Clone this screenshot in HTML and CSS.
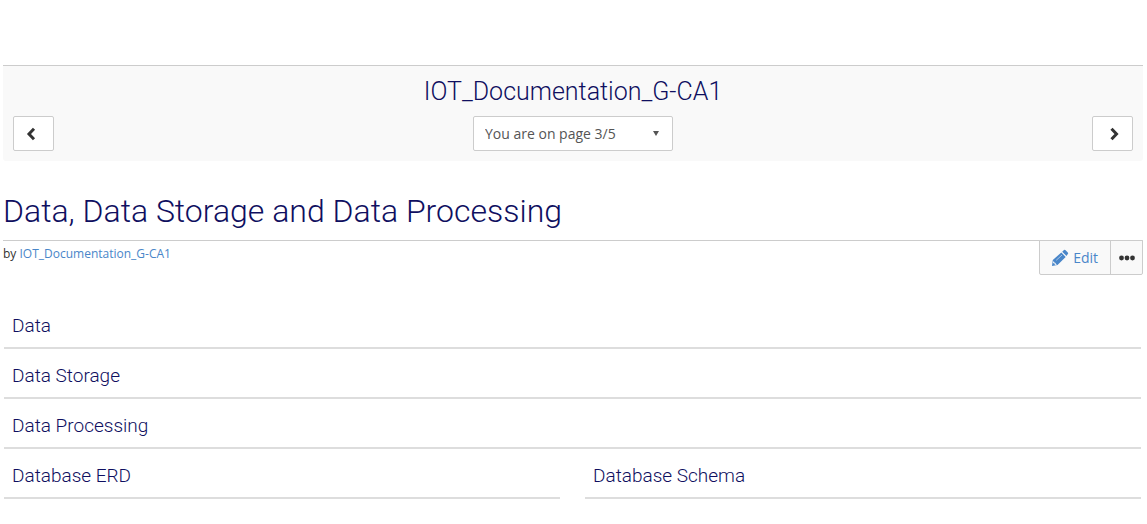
FILE: index.html
```html
<!DOCTYPE html>
<html lang="en">
<head>
<meta charset="utf-8">
<title>Data, Data Storage and Data Processing</title>
<link rel="stylesheet" href="styles.css">
</head>
<body>
<main class="page">
  <nav class="collection" aria-label="Collection pages">
    <h2 class="collection-title">IOT_Documentation_G-CA1</h2>
    <div class="collection-controls">
      <button class="nav-button" type="button" aria-label="Previous page">
        <svg width="10" height="14" viewBox="0 0 10 14" aria-hidden="true"><path d="M8 1.800 3 7l5 5.200" fill="none" stroke="currentColor" stroke-width="3"/></svg>
      </button>
      <div class="page-picker">
        <select class="page-select" aria-label="Page">
          <option>You are on page 3/5</option>
        </select>
      </div>
      <button class="nav-button nav-next" type="button" aria-label="Next page">
        <svg width="10" height="14" viewBox="0 0 10 14" aria-hidden="true"><path d="m1.500 1.800 5 5.200-5 5.200" fill="none" stroke="currentColor" stroke-width="3"/></svg>
      </button>
    </div>
  </nav>

  <h1 class="page-title">Data, Data Storage and Data Processing</h1>
  <div class="page-meta">
    <p class="byline">by <a href="#">IOT_Documentation_G-CA1</a></p>
    <div class="actions">
      <button class="action edit" type="button">
        <svg width="18" height="18" viewBox="0 0 18 18" aria-hidden="true"><path d="M1 17l.8-6L10.300 3.500l4.400 4.400L6.500 16z M11.200 2.700 13 1.100q.8-.6 1.600.1l2.200 2.200q.7.800 0 1.600L15.500 7z" fill="currentColor"/><path d="M5.200 11.300 11 6" stroke="#a9c5e6" stroke-width="1"/><path d="M2.600 12.500v1.500h1.600v1.600h1.300" fill="none" stroke="#f9f9f9" stroke-width="1"/></svg>
        Edit
      </button>
      <button class="action more" type="button" aria-label="More options">
        <svg width="16" height="6" viewBox="0 0 16 6" fill="currentColor" aria-hidden="true"><circle cx="2.500" cy="3" r="2.400"/><circle cx="8" cy="3" r="2.400"/><circle cx="13.500" cy="3" r="2.400"/></svg>
      </button>
    </div>
  </div>

  <div class="blocks">
    <h3 class="block wide">Data</h3>
    <h3 class="block wide">Data Storage</h3>
    <h3 class="block wide">Data Processing</h3>
    <h3 class="block">Database ERD</h3>
    <h3 class="block">Database Schema</h3>
  </div>
</main>
</body>
</html>
```
FILE: styles.css
```css
* { box-sizing: border-box; }

body {
  margin: 0;
  background: #fff;
  color: #333;
  font-family: "Open Sans", sans-serif;
  font-size: 14px;
}

h1, h2, h3, p { margin: 0; }

h1, h2, h3 {
  color: #0f0f60;
  font-family: "Roboto Slab", Roboto, sans-serif;
  font-weight: 300;
}

button, select { font: inherit; }

.page { padding: 65px 4px 0 3px; }

.collection {
  padding: 9px 10px 10px;
  border-top: 1px solid #ccc;
  border-radius: 0 0 3px 3px;
  background: #f9f9f9;
}

.collection-title {
  font-size: 25px;
  line-height: 34px;
  text-align: center;
}

.collection-controls {
  display: grid;
  grid-template-columns: 1fr 200px 1fr;
  margin-top: 7px;
}

.nav-button {
  display: flex;
  align-items: center;
  justify-content: center;
  width: 41px;
  height: 35px;
  padding: 0 5px 0 0;
  border: 1px solid #ccc;
  border-radius: 2px;
  background: #fff;
  color: #333;
}

.nav-next {
  justify-self: end;
  padding: 0 0 0 5px;
}

.page-picker {
  display: grid;
  position: relative;
}

.page-picker::after {
  content: "";
  position: absolute;
  top: 15px;
  right: 14px;
  border: solid transparent;
  border-width: 5px 3px 0;
  border-top-color: #555;
  pointer-events: none;
}

.page-select {
  appearance: none;
  width: 100%;
  height: 35px;
  padding: 0 11px;
  border: 1px solid #ccc;
  border-radius: 2px;
  background: #fff;
  color: #555;
}

.page-title {
  margin-top: 29px;
  padding-bottom: 8px;
  border-bottom: 1px solid #ccc;
  font-size: 32px;
  line-height: 42px;
}

.page-meta {
  display: flex;
  align-items: flex-start;
  justify-content: space-between;
}

.byline {
  padding-top: 4px;
  font-size: 12px;
  line-height: 18px;
}

.byline a {
  color: #4986c9;
  text-decoration: none;
}

.actions {
  display: flex;
  margin-top: -1px;
  border: 1px solid #ccc;
  border-radius: 0 0 2px 2px;
  background: #f9f9f9;
}

.action {
  display: flex;
  align-items: center;
  justify-content: center;
  height: 33px;
  border: 0;
  background: none;
}

.edit {
  gap: 4px;
  padding: 0 12px 0 11px;
  color: #4986c9;
}

.more {
  width: 32px;
  padding: 0;
  border-left: 1px solid #ccc;
  color: #333;
}

.blocks {
  display: grid;
  grid-template-columns: 1fr 1fr;
  column-gap: 25px;
  margin: 24px 2px 24px 1px;
}

.block {
  padding: 15px 8px 9px;
  border-bottom: 2px solid #ddd;
  font-size: 19px;
  line-height: 24px;
}

.wide { grid-column: 1 / -1; }
```
